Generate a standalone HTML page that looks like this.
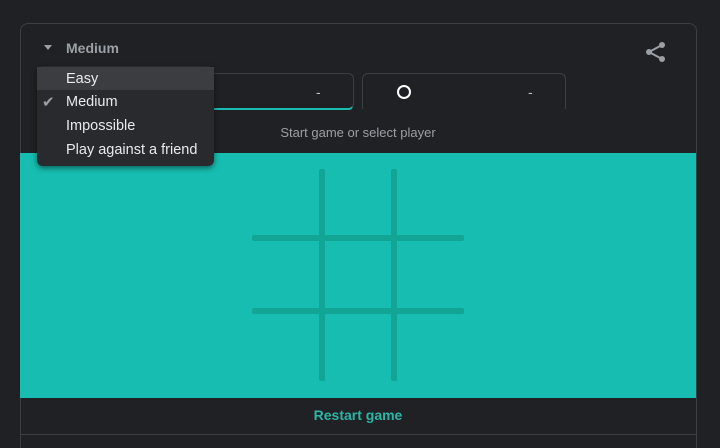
<!DOCTYPE html>
<html style="width:720px;height:448px;overflow:hidden"><head><style>
*{margin:0;padding:0;box-sizing:border-box}
body{width:720px;height:448px;background:#202124;font-family:"Liberation Sans",sans-serif;position:relative;overflow:hidden}
.card{position:absolute;left:20px;top:23px;width:677px;height:440px;border:1px solid #3c4043;border-radius:8px}
.abs{position:absolute}
</style></head><body>
<div class="card"></div>
<div class="abs" style="left:44px;top:45px;width:0;height:0;border-left:4px solid transparent;border-right:4px solid transparent;border-top:5px solid #9aa0a6"></div>
<div class="abs" style="left:66px;top:40px;font-size:14px;font-weight:bold;color:#9aa0a6">Medium</div>
<svg class="abs" style="left:645px;top:41px" width="22" height="22" viewBox="0 0 22 22"><g fill="#9aa0a6"><circle cx="17" cy="4" r="3"/><circle cx="4" cy="11" r="3"/><circle cx="17" cy="18" r="3"/></g><path d="M17 4L4 11L17 18" stroke="#9aa0a6" stroke-width="2" fill="none"/></svg>
<div class="abs" style="left:150px;top:73px;width:204px;height:37px;border:1px solid #3c4043;border-bottom:2px solid #17bdb0;border-radius:6px"></div>
<div class="abs" style="left:316px;top:84px;color:#bdc1c6;font-size:14px">-</div>
<div class="abs" style="left:362px;top:73px;width:204px;height:36px;border:1px solid #3c4043;border-bottom:none;border-radius:6px 6px 0 0"></div>
<div class="abs" style="left:397px;top:85px;width:14px;height:14px;border:2px solid #fff;border-radius:50%"></div>
<div class="abs" style="left:528px;top:84px;color:#bdc1c6;font-size:14px">-</div>
<div class="abs" style="left:208px;width:300px;top:125px;text-align:center;font-size:13px;color:#9aa0a6">Start game or select player</div>
<div class="abs" style="left:20px;top:153px;width:676px;height:245px;background:#17bdb0"></div>
<div class="abs" style="left:319px;top:169px;width:6px;height:212px;background:#12a595;border-radius:2px"></div>
<div class="abs" style="left:391px;top:169px;width:6px;height:212px;background:#12a595;border-radius:2px"></div>
<div class="abs" style="left:252px;top:235px;width:212px;height:6px;background:#12a595;border-radius:2px"></div>
<div class="abs" style="left:252px;top:308px;width:212px;height:6px;background:#12a595;border-radius:2px"></div>
<div class="abs" style="left:20px;top:407px;width:676px;text-align:center;font-size:14px;font-weight:bold;color:#2bb5a6">Restart game</div>
<div class="abs" style="left:20px;top:434px;width:676px;height:1px;background:#3c4043"></div>
<div class="abs" style="left:37px;top:66px;width:177px;height:100px;background:#292a2d;border-radius:6px;box-shadow:0 2px 6px rgba(0,0,0,.5)"></div>
<div class="abs" style="left:37px;top:67px;width:177px;height:23px;background:#3c3d40"></div>
<div class="abs" style="left:42px;top:93px;font-size:15px;color:#9aa0a6">✔</div>
<div class="abs" style="left:66px;top:71px;font-size:14.5px;color:#e8eaed;line-height:16px">Easy</div>
<div class="abs" style="left:66px;top:94px;font-size:14.5px;color:#e8eaed;line-height:16px">Medium</div>
<div class="abs" style="left:66px;top:118px;font-size:14.5px;color:#e8eaed;line-height:16px">Impossible</div>
<div class="abs" style="left:66px;top:142px;font-size:14.5px;color:#e8eaed;line-height:16px">Play against a friend</div>
</body></html>
